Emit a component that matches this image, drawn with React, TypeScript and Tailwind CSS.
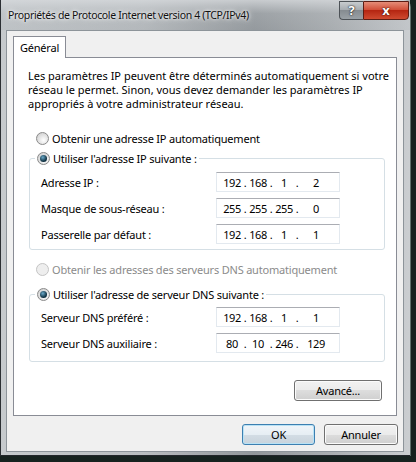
import { Fragment } from "react";

const Radio = ({ checked = false, disabled = false }: { checked?: boolean; disabled?: boolean }) => (
  <span
    className={
      disabled
        ? "flex h-[13px] w-[13px] shrink-0 items-center justify-center rounded-full border border-[#c4c4c4] bg-[#eeeeee]"
        : "flex h-[13px] w-[13px] shrink-0 items-center justify-center rounded-full border border-[#8a8a8a] bg-[radial-gradient(circle_at_60%_65%,#ffffff,#d2d2d2_80%)]"
    }
  >
    {checked && (
      <span className="h-[7px] w-[7px] rounded-full bg-[radial-gradient(circle_at_40%_35%,#6aa9c9,#0e2f40_65%)]" />
    )}
  </span>
);

const IpBox = ({ parts }: { parts: string[] }) => (
  <div className="flex h-[20px] w-[124px] items-center border border-[#e3e9ef] border-t-[#abadb3] bg-white pl-[4px] tracking-[-0.4px]">
    {parts.map((p, i) => (
      <Fragment key={i}>
        <span className={i === 3 ? "flex-1 pr-[6px] text-center" : "w-[22px] text-center"}>{p}</span>
        {i < 3 && <span className="w-[4px] text-center">.</span>}
      </Fragment>
    ))}
  </div>
);

const Row = ({ label, parts }: { label: string; parts: string[] }) => (
  <div className="flex items-center justify-between pl-[11px] pr-[44px]">
    <span>{label}</span>
    <IpBox parts={parts} />
  </div>
);

const Button = ({ label, main = false, w }: { label: string; main?: boolean; w: string }) => (
  <button
    className={`${w} h-[21px] rounded-[3px] border text-[11px] leading-none text-black ${
      main
        ? "border-[#3c7fb1] bg-[linear-gradient(#f0f5f9_0%,#e6eef4_50%,#d3dde5_50%,#c8d3dc_100%)] shadow-[inset_0_0_0_1px_#b9e2f5]"
        : "border-[#707070] bg-[linear-gradient(#f2f2f2_0%,#ebebeb_50%,#dddddd_50%,#cfcfcf_100%)] shadow-[inset_0_0_0_1px_#fbfbfb]"
    }`}
  >
    {label}
  </button>
);

export default function App() {
  return (
    <div className="flex h-[462px] w-[416px] overflow-hidden whitespace-nowrap bg-[#16221f] font-['Noto_Sans',sans-serif] text-[11px] leading-[15px] tracking-[-0.2px] text-black">
      <div className="flex h-[456px] w-[410px] flex-col rounded-tr-[7px] border-l border-[#2b2f33] bg-[linear-gradient(90deg,#c6cacd_0%,#b9bdc0_35%,#92979b_62%,#aaaeb1_80%,#cbced1_100%)] shadow-[1px_0_0_#5d6f6a]">
        {/* title bar */}
        <div className="flex h-[30px] items-start bg-[linear-gradient(#d6d9dccc,#b3b8bc55_45%,#9ea4a933)]">
          <span className="pl-[7px] pt-[8px] text-[10.5px] tracking-[-0.35px] text-[#111] [text-shadow:0_0_6px_#ffffff,0_0_3px_#ffffff]">
            Propriétés de Protocole Internet version 4 (TCP/IPv4)
          </span>
          <div className="ml-auto mr-[1px] mt-[1px] flex h-[19px]">
            <div className="flex w-[24px] items-center justify-center rounded-bl-[4px] border border-r-0 border-[#4d5257] bg-[linear-gradient(#c8cccf,#a3a9ae_50%,#868c91_50%,#9aa1a6)] text-[13px] font-bold text-white [text-shadow:0_0_2px_#222,0_0_1px_#000]">
              ?
            </div>
            <div className="flex w-[46px] items-center justify-center rounded-br-[4px] border border-[#5c1d14] bg-[linear-gradient(#e58d78,#d04a33_50%,#b52612_50%,#cf4a30)] text-[13px] font-bold text-white [text-shadow:0_0_2px_#5a1208,0_0_1px_#000]">
              x
            </div>
          </div>
        </div>

        <div className="flex flex-1 px-[5px]">
          {/* client area */}
          <div className="flex w-[398px] flex-col border border-[#8d949a] bg-[#f0f0f0] pl-[6px] pt-[5px]">
            <div className="relative z-10 -mb-px flex h-[22px] w-[53px] items-center justify-center border border-b-0 border-[#898c95] bg-white">
              Général
            </div>
            <div className="flex h-[359px] w-[384px] flex-col border border-[#898c95] bg-white px-[14px]">
              <p className="pt-[11px] leading-[14px] tracking-normal">
                Les paramètres IP peuvent être déterminés automatiquement si votre
                <br />
                réseau le permet. Sinon, vous devez demander les paramètres IP
                <br />
                appropriés à votre administrateur réseau.
              </p>

              <label className="mt-[20px] flex items-center gap-[3px] pl-[8px]">
                <Radio />
                Obtenir une adresse IP automatiquement
              </label>

              <fieldset className="mt-[5px] ml-px w-[356px] rounded-[3px] border border-[#d5dfe5] pb-[5px]">
                <legend className="ml-[5px] flex items-center gap-[3px] px-[2px]">
                  <Radio checked />
                  Utiliser l'adresse IP suivante :
                </legend>
                <div className="flex flex-col gap-[6px] pt-[6px]">
                  <Row label="Adresse IP :" parts={["192", "168", "1", "2"]} />
                  <Row label="Masque de sous-réseau :" parts={["255", "255", "255", "0"]} />
                  <Row label="Passerelle par défaut :" parts={["192", "168", "1", "1"]} />
                </div>
              </fieldset>

              <label className="mt-[12px] flex items-center gap-[3px] pl-[8px] text-[#8b8b8b]">
                <Radio disabled />
                Obtenir les adresses des serveurs DNS automatiquement
              </label>

              <fieldset className="mt-[10px] ml-px w-[356px] rounded-[3px] border border-[#d5dfe5] pb-[8px]">
                <legend className="ml-[5px] flex items-center gap-[3px] px-[2px]">
                  <Radio checked />
                  Utiliser l'adresse de serveur DNS suivante :
                </legend>
                <div className="flex flex-col gap-[6px] pt-[5px]">
                  <Row label="Serveur DNS préféré :" parts={["192", "168", "1", "1"]} />
                  <Row label="Serveur DNS auxiliaire :" parts={["80", "10", "246", "129"]} />
                </div>
              </fieldset>

              <div className="mt-[18px] flex justify-end">
                <Button label="Avancé..." w="w-[88px]" />
              </div>
            </div>

            <div className="mt-[8px] flex justify-end gap-[9px] pr-[5px]">
              <Button label="OK" main w="w-[73px]" />
              <Button label="Annuler" w="w-[74px]" />
            </div>
          </div>
        </div>
        <div className="h-[4px] border-b border-[#23272b]" />
      </div>
    </div>
  );
}
